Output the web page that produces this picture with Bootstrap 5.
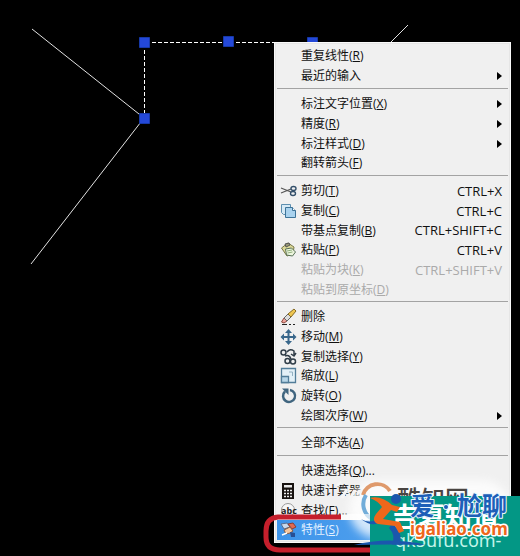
<!DOCTYPE html>
<html lang="zh-CN">
<head>
<meta charset="utf-8">
<meta name="viewport" content="width=device-width, initial-scale=1">
<title>特性</title>
<link href="https://cdn.jsdelivr.net/npm/bootstrap@5.3.0/dist/css/bootstrap.min.css" rel="stylesheet">
<style>
body{background:#000;font-family:"Open Sans","Noto Sans CJK SC",sans-serif;min-height:100vh}
.drawing{left:0;top:0}
.ctx-menu{left:274px;top:42px;width:237px;background:#f0f0f0;border:1px solid #fafafa;box-shadow:inset 0 0 0 1px #e6e6e6;padding:3px 2px 2px}
.ctx-item{height:20px;border:0;background:none;color:#111;font-size:12px;line-height:20px;padding:0 6px 0 3px;white-space:nowrap}
.ctx-item:nth-child(3n){height:19px;line-height:19px}
.ctx-item:disabled{color:#aaa}
.ctx-item .ico{width:18px;height:18px;margin-right:3px;flex:none}
.ctx-item.current{background:linear-gradient(90deg,#3d94ea,#55a3ee 60%,#fff);color:#e4f1ff}
.shortcut{font-size:13px}
.ctx-rule{height:1px;margin:2px 0 5px;border:0;background:#a3a3a3;opacity:1}
.caret{border:solid transparent;border-width:4px 0 4px 5px;border-left-color:#000}
.overlay{left:250px;top:464px;pointer-events:none}
</style>
<script src="https://cdn.jsdelivr.net/npm/bootstrap@5.3.0/dist/js/bootstrap.bundle.min.js"></script>
</head>
<body class="position-relative overflow-hidden">
<svg class="drawing position-absolute" width="520" height="556" viewBox="0 0 520 556" aria-hidden="true">
  <g stroke="#e2e2e2" fill="none"><path d="M32 29 144 118 31 264M391 42l17-17"/>
  <path d="M144.500 50v66M152 42.500H312" stroke="#fff" stroke-dasharray="4 2"/></g>
  <g fill="#2448d8" stroke="#1739a8"><path d="M139.500 37.500h10v10h-10zM223.500 36.500h10v10h-10zM307.500 37.500h10v10h-10zM139.500 113.500h10v10h-10z"/></g>
</svg>

<div class="ctx-menu position-absolute" role="menu">
  <div class="d-flex flex-column">
    <button class="ctx-item d-flex align-items-center" role="menuitem"><span class="ico"></span>重复线性(<u>R</u>)</button>
    <button class="ctx-item d-flex align-items-center" role="menuitem"><span class="ico"></span>最近的输入<span class="caret ms-auto"></span></button>
  </div>
  <hr class="ctx-rule">
  <div class="d-flex flex-column">
    <button class="ctx-item d-flex align-items-center" role="menuitem"><span class="ico"></span>标注文字位置(<u>X</u>)<span class="caret ms-auto"></span></button>
    <button class="ctx-item d-flex align-items-center" role="menuitem"><span class="ico"></span>精度(<u>R</u>)<span class="caret ms-auto"></span></button>
    <button class="ctx-item d-flex align-items-center" role="menuitem"><span class="ico"></span>标注样式(<u>D</u>)<span class="caret ms-auto"></span></button>
    <button class="ctx-item d-flex align-items-center" role="menuitem"><span class="ico"></span>翻转箭头(<u>F</u>)</button>
  </div>
  <hr class="ctx-rule">
  <div class="d-flex flex-column">
    <button class="ctx-item d-flex align-items-center" role="menuitem"><svg class="ico" viewBox="0 0 18 18" fill="none" stroke="#333"><path d="M1 6l10 4M1 11l10-4" stroke="#555" stroke-width="1.300"/><ellipse cx="13.500" cy="6.500" rx="2.500" ry="2" stroke="#34506b" stroke-width="1.400"/><ellipse cx="13" cy="11.500" rx="2.500" ry="2" stroke="#34506b" stroke-width="1.400"/></svg>剪切(<u>T</u>)<span class="shortcut ms-auto">CTRL+X</span></button>
    <button class="ctx-item d-flex align-items-center" role="menuitem"><svg class="ico" viewBox="0 0 18 18"><path d="M1.500 2.500h9v10h-7l-2-2z" fill="#d6e9f5" stroke="#5d8fb0"/><path d="M5.500 5.500h7l3 3v7h-10z" fill="#a9d2ee" stroke="#3d7398"/><path d="M12.500 5.500v3h3" fill="#fff" stroke="#3d7398"/></svg>复制(<u>C</u>)<span class="shortcut ms-auto">CTRL+C</span></button>
    <button class="ctx-item d-flex align-items-center" role="menuitem"><span class="ico"></span>带基点复制(<u>B</u>)<span class="shortcut ms-auto">CTRL+SHIFT+C</span></button>
    <button class="ctx-item d-flex align-items-center" role="menuitem"><svg class="ico" viewBox="0 0 18 18"><path d="M1.500 7 8 2l6 4-1 7-6 2z" fill="#dcd898" stroke="#777747"/><path d="M5 3l4-1 1 2-4 2z" fill="#9a9a78" stroke="#555"/><path d="M5.500 8l6-1 4 4-3 4-6-1z" fill="#eef6df" stroke="#587157"/><path d="M7 10l5-1M7.500 12l5-1" stroke="#8fb07c"/></svg>粘贴(<u>P</u>)<span class="shortcut ms-auto">CTRL+V</span></button>
    <button class="ctx-item d-flex align-items-center" role="menuitem" disabled><span class="ico"></span>粘贴为块(<u>K</u>)<span class="shortcut ms-auto">CTRL+SHIFT+V</span></button>
    <button class="ctx-item d-flex align-items-center" role="menuitem" disabled><span class="ico"></span>粘贴到原坐标(<u>D</u>)</button>
  </div>
  <hr class="ctx-rule">
  <div class="d-flex flex-column">
    <button class="ctx-item d-flex align-items-center" role="menuitem"><svg class="ico" viewBox="0 0 18 18"><path d="M1.500 14 4 10l3 3-3 2z" fill="#f0a49b" stroke="#8e4a40"/><path d="M4 10l4-4 3 3-4 4z" fill="#ddd" stroke="#666"/><path d="M8 6l6-5 2 2-5 6z" fill="#efc651" stroke="#866b24"/><path d="M2 16.500h5M9 16.500h2M13 16.500h2" stroke="#222"/></svg>删除</button>
    <button class="ctx-item d-flex align-items-center" role="menuitem"><svg class="ico" viewBox="0 0 18 18"><path d="M8.500 1 12 5H9.500v3H13V5.500L16.500 9 13 12.500V10H9.500v3H12L8.500 17 5 13h2.500v-3H4v2.500L.500 9 4 5.500V8h3.500V5H5z" fill="#39678b"/></svg>移动(<u>M</u>)</button>
    <button class="ctx-item d-flex align-items-center" role="menuitem"><svg class="ico" viewBox="0 0 18 18" fill="none" stroke="#303d48" stroke-width="1.500"><circle cx="3.500" cy="4.500" r="2.500"/><circle cx="7.500" cy="13" r="2.500"/><circle cx="13" cy="13.500" r="2.500"/><path d="M7 4q3-4 7-1v4M11 6l3 2 2-3M5 8q4-2 6 3"/></svg>复制选择(<u>Y</u>)</button>
    <button class="ctx-item d-flex align-items-center" role="menuitem"><svg class="ico" viewBox="0 0 18 18"><path d="M1.500 1.500h14v14h-14z" fill="#e3f0f7" stroke="#527d99" stroke-width="1.300"/><path d="M1.500 9.500h7v6h-7z" fill="#b9d7e9" stroke="#527d99" stroke-width="1.300"/><path d="M9 5h3.500v4" fill="none" stroke="#94b1c2"/></svg>缩放(<u>L</u>)</button>
    <button class="ctx-item d-flex align-items-center" role="menuitem"><svg class="ico" viewBox="0 0 18 18"><path d="M5 4.500A6 6 0 1 0 10 3" fill="none" stroke="#40657f" stroke-width="2.500"/><path d="M2 1.500h6.500V8z" fill="#40657f"/></svg>旋转(<u>O</u>)</button>
    <button class="ctx-item d-flex align-items-center" role="menuitem"><span class="ico"></span>绘图次序(<u>W</u>)<span class="caret ms-auto"></span></button>
  </div>
  <hr class="ctx-rule">
  <div class="d-flex flex-column">
    <button class="ctx-item d-flex align-items-center" role="menuitem"><span class="ico"></span>全部不选(<u>A</u>)</button>
  </div>
  <hr class="ctx-rule">
  <div class="d-flex flex-column">
    <button class="ctx-item d-flex align-items-center" role="menuitem"><span class="ico"></span>快速选择(<u>Q</u>)...</button>
    <button class="ctx-item d-flex align-items-center" role="menuitem"><svg class="ico" viewBox="0 0 18 18"><path d="M2 1h12v16H2z" fill="#17120f"/><path d="M4 3h8v2.500H4z" fill="#e8e8e8"/><path d="M4 8.500h8M4 11.500h8M4 14.500h8" stroke="#eee" stroke-width="1.500" stroke-dasharray="2 1"/></svg>快速计算器</button>
    <button class="ctx-item d-flex align-items-center" role="menuitem"><svg class="ico" viewBox="0 0 18 18"><circle cx="8" cy="8" r="6.500" fill="#f7f7f7" stroke="#999"/><path d="M12 13l3 3" stroke="#888" stroke-width="2"/><text x="1" y="12" font-size="9" font-weight="700" fill="#222">abc</text></svg>查找(<u>F</u>)...</button>
    <button class="ctx-item current d-flex align-items-center" role="menuitem"><svg class="ico" viewBox="0 0 18 18"><path d="M1 3l6-1 3 4-6 2z" fill="#c8d8ea" stroke="#566f91"/><path d="M8 3l5-1 3 4-4 2z" fill="#e06a50" stroke="#8c3b32"/><path d="M4 9l6-3 3 4-3 2-4 1z" fill="#f5c79f" stroke="#865c45"/><path d="M10 11l5 1v4h-4z" fill="#274f94"/><path d="M2 14l5-2" stroke="#fff" stroke-width="1.500"/></svg>特性(<u>S</u>)</button>
  </div>
</div>

<svg class="overlay position-absolute" width="270" height="92" viewBox="250 464 270 92" role="img" aria-label="爱·尬聊 igaliao.com">
  <defs>
    <filter id="haze" x="-20%" y="-30%" width="140%" height="160%"><feGaussianBlur stdDeviation="4"/></filter>
    <clipPath id="inMenu"><path d="M276 464h234v79H276z"/></clipPath>
  </defs>
  <g clip-path="url(#inMenu)">
    <rect x="349" y="480" width="162" height="58" rx="29" fill="#fff" opacity=".75" filter="url(#haze)"/>
    <path d="M337 486l4-4M342 498l5-9M350 499l5-9M357 493l5-2" stroke="#f5f5f5" stroke-width="3"/>
  </g>
  <path d="M390 491A15 15 0 0 0 363 495" fill="none" stroke="#df9a6c" stroke-width="4"/>
  <path d="M366 495A17 17 0 0 0 372 519" fill="none" stroke="#72add9" stroke-width="4"/>
  <text x="397" y="508" font-size="24" font-weight="500" fill="#4a4542" font-family="'Noto Sans CJK SC',sans-serif">酷知网</text>
  <path d="M341 517H278Q266 518 266 531V537Q266 550 280 550H371" fill="none" stroke="#c51f2c" stroke-width="5"/>
  <path d="M341 514h30v6h-30z" fill="#fff" opacity=".65"/>
  <path d="M370 496H520V556H370z" fill="#039785"/>
  <text x="391" y="527" font-size="27" font-weight="700" fill="#fff" font-family="'Noto Sans CJK SC',sans-serif">吉夏知道</text>
  <text x="395" y="547" font-size="18" fill="#c4f5ea" font-family="'Noto Sans',sans-serif">qk5ufu.com-</text>
  <g fill="#1b57ad"><circle cx="396" cy="499" r="5"/><path d="M361 519q10 6 18-2l3 3q-8 9-21-1zM392 524q11 6 8 21h-8q4-10-3-17zM354 545q30-8 64-2l7 2q-36-1-71 0z"/></g>
  <path d="M370 498q11-3 22 7l8 2-3 5-6-2-8 9 17 3 4 9-5 2-4-7-17-2q-7-3-2-10l6-7q-4-6-12-9z" fill="#ee671b"/>
  <g paint-order="stroke" stroke-linejoin="round" font-weight="700">
    <g fill="#1c5fb8" stroke="#e9f7ff" stroke-width="2" font-family="'Noto Sans CJK SC',sans-serif" font-size="25"><text x="410" y="515">爱</text><circle cx="446" cy="507" r="2"/><text x="457" y="515">尬聊</text></g>
    <text x="410" y="535" font-size="17" fill="#ee671b" stroke="#fff" stroke-width="3" font-family="'Noto Sans',sans-serif">igaliao.com</text>
  </g>
</svg>
</body>
</html>
